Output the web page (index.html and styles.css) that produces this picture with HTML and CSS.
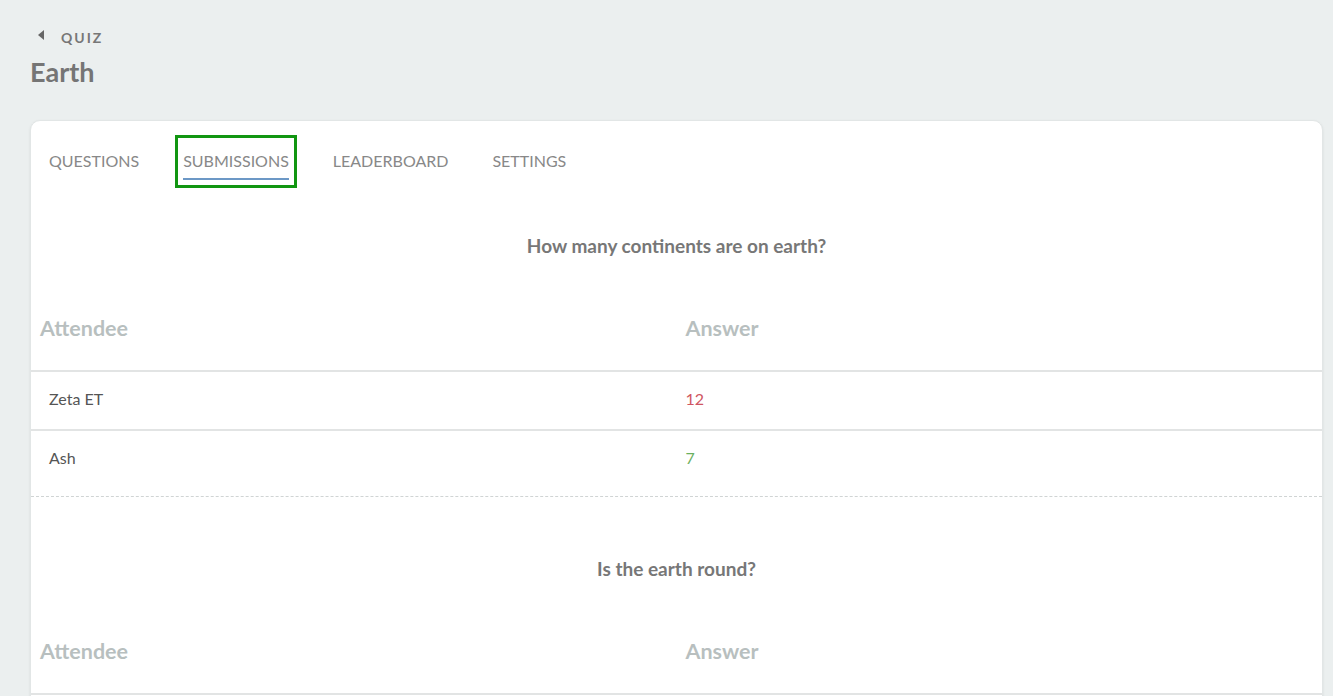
FILE: index.html
```html
<!DOCTYPE html>
<html>
<head>
    <title>Earth - Submissions</title>
    <link rel="stylesheet" href="styles.css">
</head>
<body>
    <div class="page">
        <!-- Breadcrumb + title -->
        <a class="crumb" href="#"><span class="crumb-arrow"></span>Quiz</a>
        <h1 class="title">Earth</h1>

        <div class="card">
            <nav class="tabs">
                <a class="tab" href="#">Questions</a>
                <a class="tab active" href="#">Submissions</a>
                <a class="tab" href="#">Leaderboard</a>
                <a class="tab" href="#">Settings</a>
            </nav>

            <!-- Question 1 -->
            <div class="section">
                <h3 class="question">How many continents are on earth?</h3>
                <table class="answers">
                    <thead>
                        <tr><th>Attendee</th><th>Answer</th></tr>
                    </thead>
                    <tbody>
                        <tr><td class="name">Zeta ET</td><td class="wrong">12</td></tr>
                        <tr><td class="name">Ash</td><td class="right">7</td></tr>
                    </tbody>
                </table>
            </div>

            <!-- Question 2 -->
            <div class="section">
                <h3 class="question">Is the earth round?</h3>
                <table class="answers">
                    <thead>
                        <tr><th>Attendee</th><th>Answer</th></tr>
                    </thead>
                    <tbody>
                        <tr><td class="name">Zeta ET</td><td class="right">Yes</td></tr>
                    </tbody>
                </table>
            </div>
        </div>
    </div>
</body>
</html>
```

FILE: styles.css
```css
body { margin: 0; background: #ebefef; font-family: Lato, "Open Sans", sans-serif; color: #555; }
.page { padding: 30px 10px 0 30px; }

.crumb { display: flex; align-items: center; height: 16px; font-size: 14px; line-height: 16px; font-weight: bold; letter-spacing: 2px; text-transform: uppercase; color: #777; text-decoration: none; }
.crumb-arrow { width: 0; height: 0; margin: -6px 17px 0 8px; border-top: 5px solid transparent; border-bottom: 5px solid transparent; border-right: 6px solid #666; }
.title { margin: 8px 0 30px; font-size: 27px; line-height: 36px; font-weight: bold; color: #757575; }

.card { background: #fff; border: 1px solid #e2e6e6; border-radius: 10px; box-shadow: 0 1px 3px rgba(0, 0, 0, 0.08); padding-bottom: 80px; }

.tabs { display: flex; gap: 44px; padding: 22px 0 0 18px; }
.tab { padding: 8px 0 7px; border-bottom: 2px solid transparent; font-size: 16px; line-height: 20px; color: #888; text-decoration: none; text-transform: uppercase; }
.tab.active { border-bottom-color: #6c98c6; outline: 3px solid #119611; outline-offset: 5px; }

.section { padding: 54px 0 8px; }
.section + .section { border-top: 1px dashed #d0d4d4; padding-top: 60px; }
.question { margin: 0 0 56px; text-align: center; font-size: 19px; line-height: 24px; font-weight: bold; color: #777; }

.answers { width: 100%; border-collapse: collapse; }
.answers th { width: 50%; padding: 0 10px 28px 9px; text-align: left; font-size: 21.5px; line-height: 28px; font-weight: bold; color: #b8bfbf; border-bottom: 2px solid #e2e4e4; }
.answers td { padding: 17px 10px 20px 9px; font-size: 16px; line-height: 20px; border-bottom: 2px solid #e2e4e4; }
.answers tr:last-child td { border-bottom: none; }
.answers td.name { padding-left: 18px; color: #555; }
.wrong { color: #cf5562; }
.right { color: #6bb05e; }
```
